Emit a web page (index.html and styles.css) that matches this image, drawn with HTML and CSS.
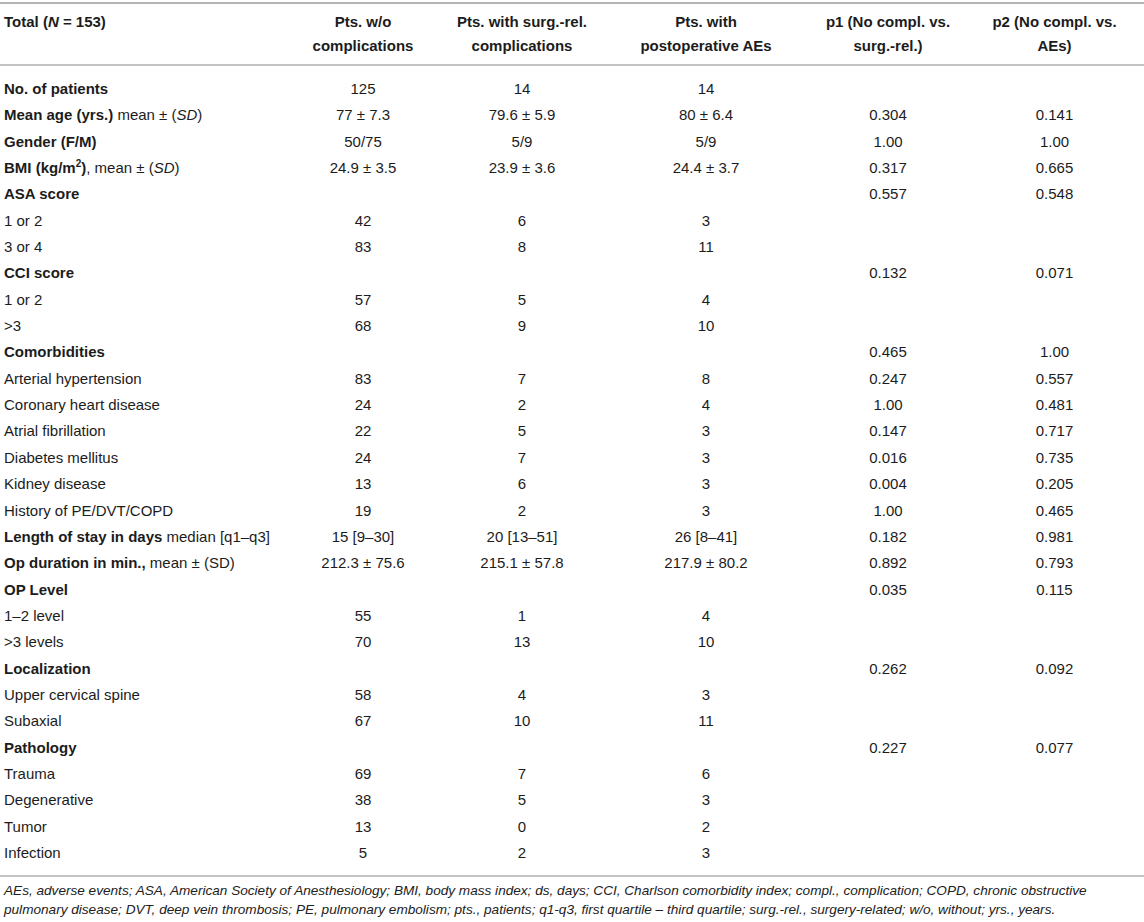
FILE: index.html
```html
<!DOCTYPE html>
<html>
<head>
  <title>Patient characteristics</title>
  <meta charset="utf-8">
  <link rel="stylesheet" href="styles.css">
</head>
<body>
  <div class="table-wrap">
    <table class="data-table">
      <colgroup>
        <col class="col-label">
        <col class="col-a">
        <col class="col-b">
        <col class="col-c">
        <col class="col-d">
        <col class="col-e">
      </colgroup>
      <thead>
        <tr>
          <th class="label">Total (<i>N</i> = 153)</th>
          <th>Pts. w/o<br>complications</th>
          <th>Pts. with surg.-rel.<br>complications</th>
          <th>Pts. with<br>postoperative AEs</th>
          <th>p1 (No compl. vs.<br>surg.-rel.)</th>
          <th>p2 (No compl. vs.<br>AEs)</th>
        </tr>
      </thead>
      <tbody>
        <tr class="first"><td class="label"><b>No. of patients</b></td><td>125</td><td>14</td><td>14</td><td></td><td></td></tr>
        <tr><td class="label"><b>Mean age (yrs.)</b> mean ± (<i>SD</i>)</td><td>77 ± 7.3</td><td>79.6 ± 5.9</td><td>80 ± 6.4</td><td>0.304</td><td>0.141</td></tr>
        <tr><td class="label"><b>Gender (F/M)</b></td><td>50/75</td><td>5/9</td><td>5/9</td><td>1.00</td><td>1.00</td></tr>
        <tr><td class="label"><b>BMI (kg/m<sup>2</sup>)</b>, mean ± (<i>SD</i>)</td><td>24.9 ± 3.5</td><td>23.9 ± 3.6</td><td>24.4 ± 3.7</td><td>0.317</td><td>0.665</td></tr>
        <tr><td class="label"><b>ASA score</b></td><td></td><td></td><td></td><td>0.557</td><td>0.548</td></tr>
        <tr><td class="label">1 or 2</td><td>42</td><td>6</td><td>3</td><td></td><td></td></tr>
        <tr><td class="label">3 or 4</td><td>83</td><td>8</td><td>11</td><td></td><td></td></tr>
        <tr><td class="label"><b>CCI score</b></td><td></td><td></td><td></td><td>0.132</td><td>0.071</td></tr>
        <tr><td class="label">1 or 2</td><td>57</td><td>5</td><td>4</td><td></td><td></td></tr>
        <tr><td class="label">&gt;3</td><td>68</td><td>9</td><td>10</td><td></td><td></td></tr>
        <tr><td class="label"><b>Comorbidities</b></td><td></td><td></td><td></td><td>0.465</td><td>1.00</td></tr>
        <tr><td class="label">Arterial hypertension</td><td>83</td><td>7</td><td>8</td><td>0.247</td><td>0.557</td></tr>
        <tr><td class="label">Coronary heart disease</td><td>24</td><td>2</td><td>4</td><td>1.00</td><td>0.481</td></tr>
        <tr><td class="label">Atrial fibrillation</td><td>22</td><td>5</td><td>3</td><td>0.147</td><td>0.717</td></tr>
        <tr><td class="label">Diabetes mellitus</td><td>24</td><td>7</td><td>3</td><td>0.016</td><td>0.735</td></tr>
        <tr><td class="label">Kidney disease</td><td>13</td><td>6</td><td>3</td><td>0.004</td><td>0.205</td></tr>
        <tr><td class="label">History of PE/DVT/COPD</td><td>19</td><td>2</td><td>3</td><td>1.00</td><td>0.465</td></tr>
        <tr><td class="label"><b>Length of stay in days</b> median [q1–q3]</td><td>15 [9–30]</td><td>20 [13–51]</td><td>26 [8–41]</td><td>0.182</td><td>0.981</td></tr>
        <tr><td class="label"><b>Op duration in min.,</b> mean ± (SD)</td><td>212.3 ± 75.6</td><td>215.1 ± 57.8</td><td>217.9 ± 80.2</td><td>0.892</td><td>0.793</td></tr>
        <tr><td class="label"><b>OP Level</b></td><td></td><td></td><td></td><td>0.035</td><td>0.115</td></tr>
        <tr><td class="label">1–2 level</td><td>55</td><td>1</td><td>4</td><td></td><td></td></tr>
        <tr><td class="label">&gt;3 levels</td><td>70</td><td>13</td><td>10</td><td></td><td></td></tr>
        <tr><td class="label"><b>Localization</b></td><td></td><td></td><td></td><td>0.262</td><td>0.092</td></tr>
        <tr><td class="label">Upper cervical spine</td><td>58</td><td>4</td><td>3</td><td></td><td></td></tr>
        <tr><td class="label">Subaxial</td><td>67</td><td>10</td><td>11</td><td></td><td></td></tr>
        <tr><td class="label"><b>Pathology</b></td><td></td><td></td><td></td><td>0.227</td><td>0.077</td></tr>
        <tr><td class="label">Trauma</td><td>69</td><td>7</td><td>6</td><td></td><td></td></tr>
        <tr><td class="label">Degenerative</td><td>38</td><td>5</td><td>3</td><td></td><td></td></tr>
        <tr><td class="label">Tumor</td><td>13</td><td>0</td><td>2</td><td></td><td></td></tr>
        <tr class="last"><td class="label">Infection</td><td>5</td><td>2</td><td>3</td><td></td><td></td></tr>
      </tbody>
    </table>
    <p class="footnote">AEs, adverse events; ASA, American Society of Anesthesiology; BMI, body mass index; ds, days; CCI, Charlson comorbidity index; compl., complication; COPD, chronic obstructive pulmonary disease; DVT, deep vein thrombosis; PE, pulmonary embolism; pts., patients; q1-q3, first quartile – third quartile; surg.-rel., surgery-related; w/o, without; yrs., years.</p>
  </div>
</body>
</html>
```

FILE: styles.css
```css
* {
  margin: 0;
  padding: 0;
  box-sizing: border-box;
}

body {
  font-family: "Liberation Sans", Arial, Helvetica, sans-serif;
  background: #fff;
  color: #1c1c1c;
}

.table-wrap {
  width: 1144px;
  padding-top: 2px;
}

.data-table {
  width: 100%;
  border-collapse: collapse;
  table-layout: fixed;
  font-size: 15px;
  border-top: 2px solid #b4b4b4;
}

.col-label { width: 283px; }
.col-a { width: 160px; }
.col-b { width: 158px; }
.col-c { width: 210px; }
.col-d { width: 154px; }
.col-e { width: 179px; }

th {
  font-weight: bold;
  text-align: center;
  vertical-align: top;
  line-height: 24px;
  padding: 6px 0 6px;
  border-bottom: 2px solid #c4c4c4;
}

td {
  text-align: center;
  line-height: 26.35px;
  padding: 0;
  white-space: nowrap;
}

.label {
  text-align: left;
  padding-left: 4px;
}

tr.first td {
  padding-top: 10px;
}

tr.last td {
  padding-bottom: 9px;
  border-bottom: 2px solid #c4c4c4;
}

sup {
  font-size: 10px;
  line-height: 0;
  vertical-align: 6px;
}

.footnote {
  font-size: 13.6px;
  font-style: italic;
  line-height: 19px;
  padding: 4px 4px 0;
  color: #222;
}
```
